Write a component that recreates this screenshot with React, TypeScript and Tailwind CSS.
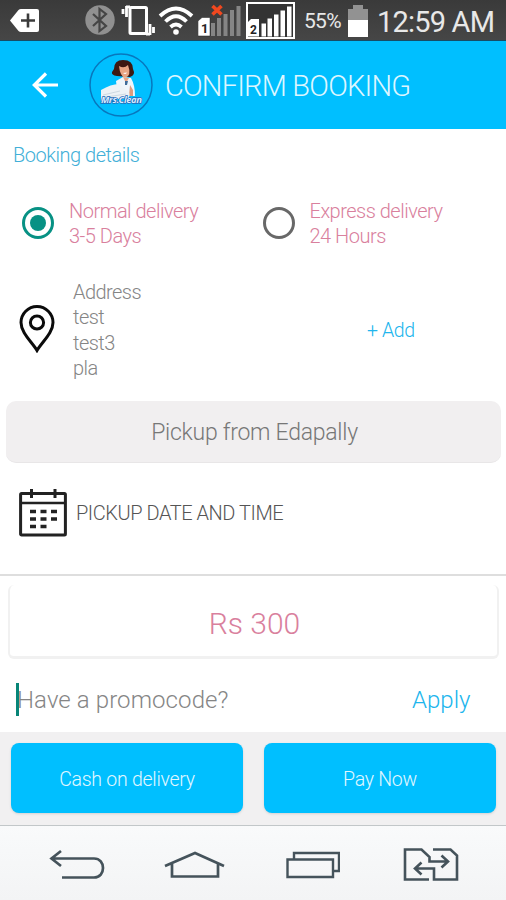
import type { ReactNode } from "react";

const signalBars = [
  { x: 13, h: 13 },
  { x: 19, h: 18 },
  { x: 25.5, h: 22 },
  { x: 32, h: 26 },
  { x: 38.5, h: 30 },
];

function StatusBar() {
  return (
    <div className="flex h-[41px] items-center border-b border-[#174d66] bg-gradient-to-b from-[#3a3a3a] to-[#464646] text-[#e8e8e8]">
      <svg className="ml-[10px] h-[25px] w-[30px] shrink-0" viewBox="0 0 30 25">
        <path d="M0 12.5 8.500 2q1-1 2.500-1h16q2 0 2 2v19q0 2-2 2H11q-1.500 0-2.500-1Z" fill="#fff" />
        <path d="M11 12.5h14M18 5.5v14" stroke="#3b3b3b" strokeWidth="2.600" />
      </svg>
      <svg className="ml-[45px] h-[30px] w-[30px] shrink-0" viewBox="0 0 30 30">
        <circle cx="15" cy="15" r="14.7" fill="#909090" />
        <path d="m8 9 13 12-6.5 5V4L21 9 8 21" fill="none" stroke="#454545" strokeWidth="2.2" />
      </svg>
      <svg className="ml-[6px] h-[34px] w-[34px] shrink-0" viewBox="0 0 34 34" fill="none" stroke="#fff">
        <rect x="9" y="4.500" width="16.500" height="26" rx="1" strokeWidth="3" />
        <path d="M2 6v5M5.500 3v11M5 3.800h4" strokeWidth="2.800" />
        <path d="M29 21v11M32.500 24v6M25 31.200h4" strokeWidth="2.800" />
      </svg>
      <svg className="ml-[3px] h-[32px] w-[36px] shrink-0" viewBox="0 0 36 32" fill="none" stroke="#fff" strokeWidth="3.800">
        <path d="M2 12Q18-3 34 12" />
        <path d="M7.500 17.500Q18 7 28.500 17.500" />
        <path d="M12.500 23Q18 18 23.500 23" />
        <circle cx="18" cy="28" r="2.800" fill="#fff" stroke="none" />
      </svg>
      <svg className="ml-[4px] h-[34px] w-[45px] shrink-0" viewBox="0 0 45 34">
        {signalBars.map((bar) => (
          <rect key={bar.x} x={bar.x} y={33 - bar.h} width="4" height={bar.h} fill="#858585" />
        ))}
        <path d="M0 18 4 14.500h8V33H0Z" fill="#fff" stroke="#222" strokeWidth=".5" />
        <text x="3" y="29.500" fontFamily="Roboto" fontWeight="700" fontSize="13" fill="#222">1</text>
        <path d="m14.500 3 9 8.500m0-8.500-9 8.500" stroke="#f1481f" strokeWidth="3.600" />
      </svg>
      <svg className="ml-[3px] h-[37px] w-[49px] shrink-0" viewBox="0 0 49 37">
        <rect x="1" y="1" width="47" height="35" fill="#333" stroke="#fff" strokeWidth="2" />
        {signalBars.map((bar) => (
          <rect key={bar.x} x={bar.x + 2.500} y={34.500 - bar.h} width="4.500" height={bar.h} fill="#fff" />
        ))}
        <path d="M2 20 5 17h8v17.500H2Z" fill="#fff" />
        <text x="4" y="31.500" fontFamily="Roboto" fontWeight="700" fontSize="12" fill="#222">2</text>
      </svg>
      <span className="mt-[4px] ml-[9px] w-[38px] whitespace-nowrap text-[21px] tracking-[-0.7px]">55%</span>
      <svg className="mt-[1px] ml-[6px] h-[33px] w-[20px] shrink-0" viewBox="0 0 20 33">
        <path d="M5 1h10v4h5v13H0V5h5Z" fill="#929292" />
        <path d="M0 16h20v17H0Z" fill="#fff" />
      </svg>
      <span className="mt-[5px] ml-[9px] whitespace-nowrap text-[29px] tracking-[-0.8px]">12:59 AM</span>
    </div>
  );
}

function Logo() {
  return (
    <svg className="h-[64px] w-[64px] shrink-0" viewBox="0 0 64 64">
      <circle cx="32" cy="32" r="31" fill="none" stroke="#0877bd" strokeWidth="1.500" />
      <path d="M25 16Q25 7 34 7q10 0 10 9 3 6-3 8l-13-1q-6-1-5-4Z" fill="#3d1812" />
      <path d="M30 13q5 3 9-1 4 11-3 13-5-2-6-12Z" fill="#e9a584" />
      <path d="m34 20 4-.5q-1 2.500-4 .5Z" fill="#fff" />
      <path d="m27 28 7-4 8 1q4 7 4 18H29Z" fill="#eef5fb" />
      <path d="m34 24 3 6 3-5Z" fill="#e9a584" />
      <path d="M36 28h3l-1 4h-2Z" fill="#3f6b99" />
      <path d="m41 32 3 5v6h-4Z" fill="#dd9b7d" />
      <path d="M12 37q10-6 18-6l7 6q5 2 3 8l-28 3Z" fill="#edf2f6" />
      <path d="m14 42 17-4m-14 6 20-3" stroke="#cdd9e2" />
      <text
        x="12"
        y="50"
        fontFamily="Open Sans"
        fontSize="9.500"
        fontWeight="700"
        fontStyle="italic"
        fill="#d8ecff"
        stroke="#2367b8"
        strokeWidth="1.300"
        paintOrder="stroke"
        textLength="41"
      >
        Mrs.Clean
      </text>
    </svg>
  );
}

function AppBar() {
  return (
    <header className="flex h-[88px] items-center bg-[#00bfff]">
      <svg className="ml-[32px] h-[26px] w-[26px] shrink-0" viewBox="0 0 26 26" fill="none" stroke="#fff" strokeWidth="3.200">
        <path d="M26 13H3M14 1.500 2.300 13 14 24.500" />
      </svg>
      <div className="ml-[31px]">
        <Logo />
      </div>
      <h1 className="mt-[3px] ml-[12px] whitespace-nowrap text-[29px] font-light tracking-[-0.8px] text-[#dcf6ff]">
        CONFIRM BOOKING
      </h1>
    </header>
  );
}

function DeliveryOption({ title, time, checked }: { title: string; time: string; checked?: boolean }) {
  return (
    <div className="flex w-[240.500px] items-center">
      {checked ? (
        <span className="flex h-8 w-8 items-center justify-center rounded-full border-[3px] border-[#079184]">
          <span className="h-4 w-4 rounded-full bg-[#079184]" />
        </span>
      ) : (
        <span className="h-8 w-8 rounded-full border-[3px] border-[#686868]" />
      )}
      <span className="mt-[2px] ml-[15px] whitespace-nowrap text-[20px] leading-[25px] font-light tracking-[-0.5px] text-[#d9809d]">
        {title}
        <br />
        {time}
      </span>
    </div>
  );
}

function PinIcon() {
  return (
    <svg className="h-[48px] w-[36px] shrink-0" viewBox="0 0 36 48" fill="none" stroke="#0b0b0b" strokeWidth="3">
      <path d="M18 45.500C13 37 2 28 2 17.500a16 16 0 0 1 32 0C34 28 23 37 18 45.500Z" />
      <circle cx="18" cy="17.500" r="6.600" />
    </svg>
  );
}

function CalendarIcon() {
  return (
    <svg className="h-[48px] w-[48px] shrink-0" viewBox="0 0 48 48" fill="none" stroke="#222">
      <rect x="1.600" y="4.500" width="44.800" height="41.500" rx="1" strokeWidth="3" />
      <path d="M2 14h44" strokeWidth="2.600" />
      <path d="M12.500 0v9M36 0v9" strokeWidth="3" />
      <path d="M11 22.500h6m4.500 0h6m4.500 0h6M11 30h6m4.500 0h6m4.500 0h6M11 37.500h6m4.500 0h6" strokeWidth="3.400" />
    </svg>
  );
}

function PayButton({ children }: { children: ReactNode }) {
  return (
    <button className="h-[70px] w-[232px] rounded-lg bg-[#00bfff] pt-[3px] text-[19.500px] font-light tracking-[-0.26px] text-[#e2f7ff] shadow-sm">
      {children}
    </button>
  );
}

function NavBar() {
  return (
    <nav className="flex h-[75px] border-t border-[#c2c7c9] bg-gradient-to-b from-[#f9fafb] to-[#f3f4f5] pt-[18px]">
      <svg className="ml-[49px] h-[44px] w-[56px]" viewBox="0 0 56 44" fill="none" stroke="#45535b" strokeWidth="2.700">
        <path d="M12 7 2.500 14.500 12 22M3 14.500h42c12 0 12 19 0 19H13" />
      </svg>
      <svg className="ml-[59px] h-[44px] w-[62px]" viewBox="0 0 62 44" fill="none" stroke="#45535b" strokeWidth="2.700">
        <path d="m1 22 30-13 29 13M8 19v13.500h46V19" />
      </svg>
      <svg className="ml-[60px] h-[44px] w-[54px]" viewBox="0 0 54 44" fill="none" stroke="#45535b" strokeWidth="2.400">
        <path d="M1.500 15.500H47v17.500H1.500ZM8 15.500V9h45v18H47" />
      </svg>
      <svg className="ml-[63px] h-[44px] w-[56px]" viewBox="0 0 56 44" fill="none" stroke="#45535b" strokeWidth="2.600">
        <path d="M26 35.500H2V5.500h16.500l8 7.500v4.500h18M38.500 11.500l6.500 6-6.500 6M30 5.500h17.500l6.500 6v24H31V24.500H12M18.500 18.500l-6.500 6 6.500 6" />
      </svg>
    </nav>
  );
}

export default function App() {
  return (
    <div className="flex h-[900px] w-[506px] flex-col overflow-hidden bg-white font-['Roboto',sans-serif]">
      <StatusBar />
      <AppBar />
      <main className="flex h-[603px] flex-col">
        <h2 className="mt-[14px] ml-[13px] text-[20px] leading-6 font-light tracking-[-0.48px] text-[#42afd8]">
          Booking details
        </h2>

        <div className="mt-[30px] ml-[22px] flex">
          <DeliveryOption title="Normal delivery" time="3-5 Days" checked />
          <DeliveryOption title="Express delivery" time="24 Hours" />
        </div>

        <div className="mt-[31px] flex h-[101px] items-center">
          <div className="-mt-[3px] ml-[19px]">
            <PinIcon />
          </div>
          <p className="ml-[18px] w-[294px] text-[20px] leading-[25.250px] font-light tracking-[-0.55px] text-[#858585]">
            Address
            <br />
            test
            <br />
            test3
            <br />
            pla
          </p>
          <button className="whitespace-nowrap text-[19.500px] font-light tracking-[-0.4px] text-[#20b5ed]">
            + Add
          </button>
        </div>

        <button className="mr-[5px] ml-[6px] mt-[20px] h-[62px] shrink-0 rounded-[10px] border-b border-[#e8e6e7] bg-[#f1eff0] pt-[3px] pl-[2px] text-[23px] font-light tracking-[-0.26px] text-[#777]">
          Pickup from Edapally
        </button>

        <div className="mt-[26px] ml-[19px] flex items-center">
          <CalendarIcon />
          <span className="ml-[9px] text-[20px] font-light tracking-[-0.45px] text-[#555]">
            PICKUP DATE AND TIME
          </span>
        </div>

        <div className="mt-[37px] h-[2px] shrink-0 bg-[#dedede]" />

        <div className="mr-[7px] ml-[8px] mt-[9px] flex h-[74px] shrink-0 items-center justify-center rounded-md border-x-2 border-b-3 border-[#f1f1f1] pt-[5px] pl-[2px] text-[30px] font-light text-[#d9809d]">
          Rs 300
        </div>

        <div className="mt-[23px] ml-[16px] flex h-[35px] shrink-0 items-center text-[24px] font-light">
          <span className="h-[33px] w-[3px] bg-[#078577]" />
          <span className="mt-[1px] -ml-[2px] w-[395px] whitespace-nowrap tracking-[0.1px] text-[#858585]">
            Have a promocode?
          </span>
          <span className="mt-[1px] text-[#20b5ed]">Apply</span>
        </div>
      </main>
      <div className="flex h-[93px] gap-[21px] bg-[#f1f0f1] pt-[11px] pl-[11px]">
        <PayButton>Cash on delivery</PayButton>
        <PayButton>Pay Now</PayButton>
      </div>
      <NavBar />
    </div>
  );
}
